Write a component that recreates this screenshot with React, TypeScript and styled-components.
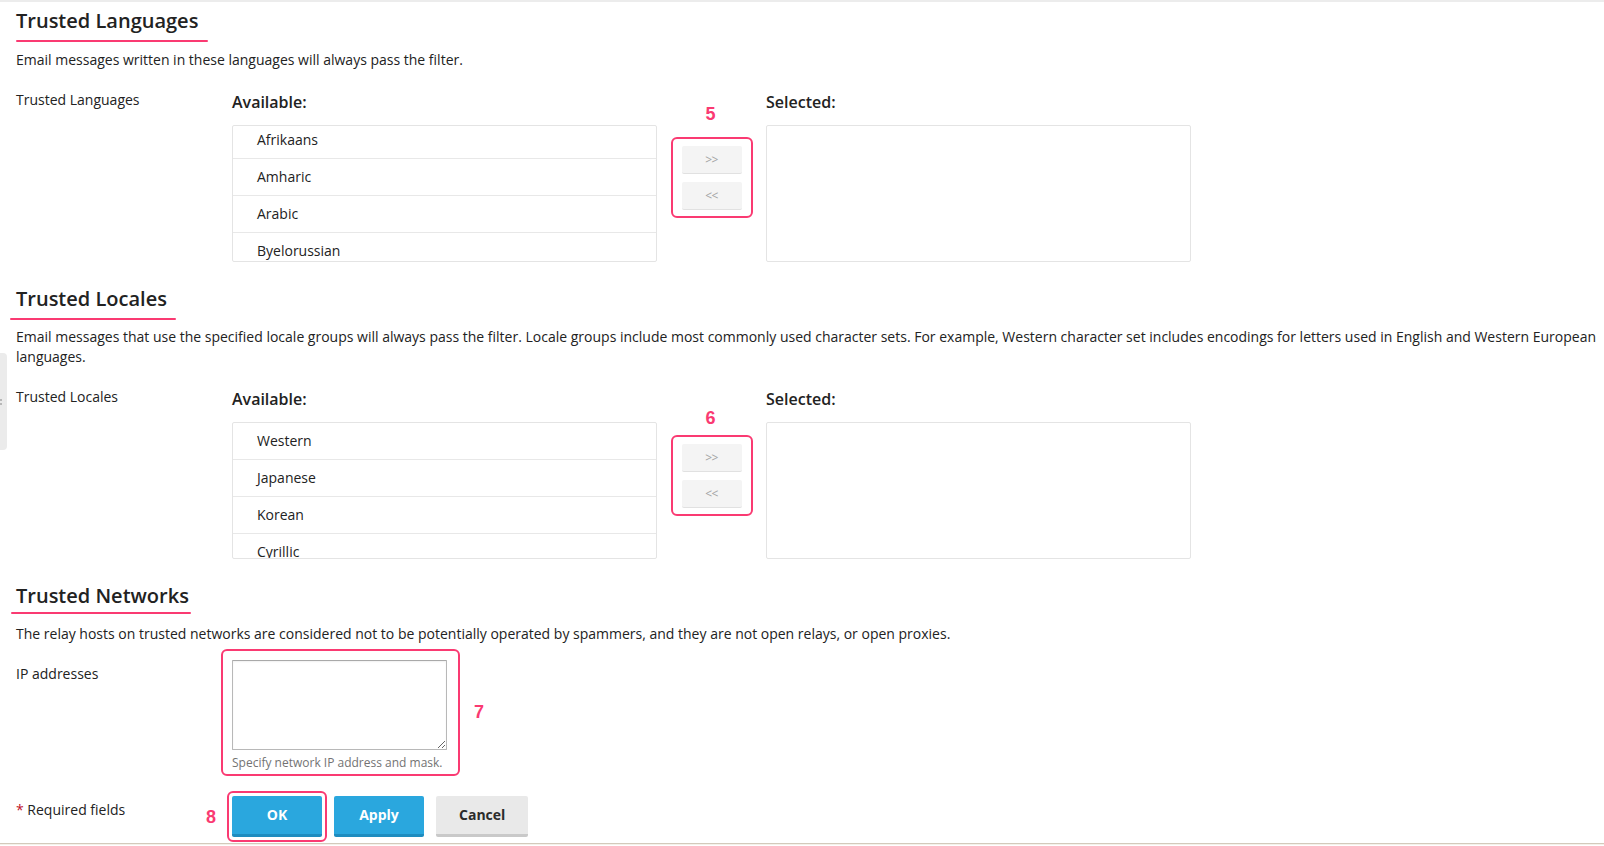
import React from "react";
import styled, { createGlobalStyle } from "styled-components";

const ACCENT = "#fa3a72";

const GlobalStyle = createGlobalStyle`
  html, body {
    margin: 0;
    padding: 0;
    overflow: hidden;
    background: #ffffff;
  }
  body {
    font-family: "Open Sans", "Noto Sans", Arial, sans-serif;
    color: #222222;
    font-size: 14px;
  }
  * { box-sizing: border-box; }
`;

const Shell = styled.div`
  position: relative;
  border-top: 2px solid #ececec;
  min-height: 844px;
  display: flex;
  flex-direction: column;
`;

const Content = styled.main`
  padding: 5px 4px 0 16px;
`;

const SideHandle = styled.div`
  position: absolute;
  left: 0;
  top: 351px;
  width: 7px;
  height: 97px;
  background: #ebebeb;
  border-radius: 0 4px 4px 0;
  display: flex;
  align-items: center;
  overflow: hidden;
`;

const Section = styled.section`
  & + & {
    margin-top: 23px;
  }
`;

const Heading = styled.h2<{ $ulLeft: number; $ulTop: number; $ulWidth: number }>`
  position: relative;
  margin: 0;
  font-size: 20px;
  line-height: 28px;
  font-weight: 600;
  color: #222222;

  &::after {
    content: "";
    position: absolute;
    left: ${(p) => p.$ulLeft}px;
    top: ${(p) => p.$ulTop}px;
    width: ${(p) => p.$ulWidth}px;
    height: 2px;
    border-radius: 1px;
    background: ${ACCENT};
  }
`;

const Description = styled.p<{ $gap?: number }>`
  margin: ${(p) => p.$gap ?? 14.5}px 0 0;
  font-size: 14px;
  line-height: 20px;
  color: #222222;
`;

const FormRow = styled.div<{ $gap?: number }>`
  display: grid;
  grid-template-columns: 216px 1fr;
  margin-top: ${(p) => p.$gap ?? 16}px;
`;

const FieldLabel = styled.div`
  padding-top: 4px;
  font-size: 14px;
  line-height: 20px;
  color: #222222;
`;

const Star = styled.span`
  color: #c0102a;
`;

const DualList = styled.div`
  display: flex;
  align-items: flex-start;
`;

const ListColumn = styled.div`
  width: 425px;
`;

const ListTitle = styled.div`
  margin: 4px 0 11px;
  font-size: 16px;
  line-height: 24px;
  font-weight: 600;
  color: #222222;
`;

const ListBox = styled.div`
  height: 137px;
  border: 1px solid #e4e4e4;
  border-radius: 2px;
  overflow: hidden;
  background: #ffffff;
`;

const ListTrack = styled.ul<{ $shift: number }>`
  list-style: none;
  margin: ${(p) => -p.$shift}px 0 0;
  padding: 0;
`;

const ListItem = styled.li`
  height: 37px;
  line-height: 36px;
  padding-left: 24px;
  border-bottom: 1px solid #e8e8e8;
  font-size: 14px;
  color: #222222;
`;

const MoverColumn = styled.div<{ $drop: number }>`
  width: 109px;
  display: flex;
  justify-content: center;
  padding-top: ${(p) => 39 + p.$drop}px;
`;

const MoverGroup = styled.div`
  position: relative;
  display: flex;
  flex-direction: column;
  gap: 8px;
  padding: 7px 9px 6px;
  border: 2px solid ${ACCENT};
  border-radius: 6px;
`;

const MoveButton = styled.button`
  width: 60px;
  height: 28px;
  padding: 0;
  border: none;
  border-bottom: 1px solid #e1e1e1;
  border-radius: 2px;
  background: #f4f4f4;
  color: #a3a3a3;
  font-family: "Open Sans", Arial, sans-serif;
  font-size: 12px;
  line-height: 27px;
  letter-spacing: -0.5px;
`;

const StepBadge = styled.span<{ $top: number; $left: number }>`
  position: absolute;
  top: ${(p) => p.$top}px;
  left: ${(p) => p.$left}px;
  font-family: "Liberation Sans", Arial, sans-serif;
  font-weight: 700;
  font-size: 18px;
  line-height: 18px;
  color: ${ACCENT};
  pointer-events: none;
`;

const TextStack = styled.div`
  position: relative;
  width: 215px;
`;

const TextArea = styled.textarea`
  display: block;
  width: 215px;
  height: 90px;
  margin: 0;
  border: 1px solid #b8b8b8;
  border-top-color: #a9a9a9;
  border-radius: 1px;
  box-shadow: inset 0 1px 2px rgba(0, 0, 0, 0.06);
  resize: both;
  font-family: "Open Sans", Arial, sans-serif;
  font-size: 14px;
`;

const Hint = styled.div`
  margin-top: 5px;
  font-size: 12px;
  line-height: 16px;
  color: #737373;
  white-space: nowrap;
`;

const CalloutFrame = styled.span<{ $inset: string }>`
  position: absolute;
  inset: ${(p) => p.$inset};
  border: 2px solid ${ACCENT};
  border-radius: 6px;
  pointer-events: none;
`;

const ButtonBar = styled.div`
  display: flex;
  align-items: flex-start;
  gap: 12px;
`;

const ButtonSlot = styled.div`
  position: relative;
  display: flex;
`;

const ActionButton = styled.button<{ $variant: "primary" | "secondary" }>`
  min-width: 90px;
  height: 41px;
  padding: 0 23px;
  border: none;
  border-radius: 2px;
  border-bottom: 3px solid
    ${(p) => (p.$variant === "primary" ? "#1e8cbf" : "#c9c9c9")};
  background: ${(p) => (p.$variant === "primary" ? "#2aa7de" : "#e9e9e9")};
  color: ${(p) => (p.$variant === "primary" ? "#ffffff" : "#2b2b2b")};
  font-family: "Open Sans", Arial, sans-serif;
  font-size: 14px;
  font-weight: 700;
  line-height: 38px;
`;

const FooterRule = styled.footer`
  margin-top: 6px;
  height: 2px;
  border-top: 1px solid #d3cabb;
  background: #f5f1eb;
`;

type Mover = {
  title: string;
  items: string[];
  shift: number;
  drop: number;
  step: string;
  stepTop: number;
};

function ListSelector({ title, items, shift, drop, step, stepTop }: Mover) {
  return (
    <DualList>
      <ListColumn>
        <ListTitle>Available:</ListTitle>
        <ListBox aria-label={title}>
          <ListTrack $shift={shift}>
            {items.map((item) => (
              <ListItem key={item}>{item}</ListItem>
            ))}
          </ListTrack>
        </ListBox>
      </ListColumn>
      <MoverColumn $drop={drop}>
        <MoverGroup>
          <StepBadge $top={stepTop} $left={33}>
            {step}
          </StepBadge>
          <MoveButton type="button">&gt;&gt;</MoveButton>
          <MoveButton type="button">&lt;&lt;</MoveButton>
        </MoverGroup>
      </MoverColumn>
      <ListColumn>
        <ListTitle>Selected:</ListTitle>
        <ListBox />
      </ListColumn>
    </DualList>
  );
}

export default function App() {
  return (
    <>
      <GlobalStyle />
      <Shell>
        <SideHandle>
          <svg width="3" height="8" viewBox="0 0 3 8" aria-hidden="true">
            <circle cx="1" cy="2" r="0.8" fill="#777" />
            <circle cx="1" cy="6" r="0.8" fill="#777" />
          </svg>
        </SideHandle>
        <Content>
          <Section>
            <Heading $ulLeft={0} $ulTop={33} $ulWidth={192}>
              Trusted Languages
            </Heading>
            <Description>
              Email messages written in these languages will always pass the filter.
            </Description>
            <FormRow>
              <FieldLabel>Trusted Languages</FieldLabel>
              <ListSelector
                title="Trusted Languages"
                items={["Afrikaans", "Amharic", "Arabic", "Byelorussian", "Bengali"]}
                shift={4}
                drop={12}
                step="5"
                stepTop={-34}
              />
            </FormRow>
          </Section>

          <Section>
            <Heading $ulLeft={-6} $ulTop={33} $ulWidth={166}>
              Trusted Locales
            </Heading>
            <Description>
              Email messages that use the specified locale groups will always pass the
              filter. Locale groups include most commonly used character sets. For
              example, Western character set includes encodings for letters used in
              English and Western European languages.
            </Description>
            <FormRow>
              <FieldLabel>Trusted Locales</FieldLabel>
              <ListSelector
                title="Trusted Locales"
                items={["Western", "Japanese", "Korean", "Cyrillic", "Chinese"]}
                shift={0}
                drop={13}
                step="6"
                stepTop={-28}
              />
            </FormRow>
          </Section>

          <Section>
            <Heading $ulLeft={-5} $ulTop={30} $ulWidth={180}>
              Trusted Networks
            </Heading>
            <Description $gap={13.5}>
              The relay hosts on trusted networks are considered not to be potentially
              operated by spammers, and they are not open relays, or open proxies.
            </Description>
            <FormRow>
              <FieldLabel>IP addresses</FieldLabel>
              <div>
                <TextStack>
                  <TextArea aria-label="IP addresses" />
                  <Hint>Specify network IP address and mask.</Hint>
                  <CalloutFrame $inset="-11px -13px -5px -11px" />
                  <StepBadge $top={43} $left={242}>
                    7
                  </StepBadge>
                </TextStack>
              </div>
            </FormRow>
          </Section>

          <FormRow $gap={25}>
            <FieldLabel>
              <Star>*</Star> Required fields
            </FieldLabel>
            <ButtonBar>
              <ButtonSlot>
                <ActionButton type="button" $variant="primary">
                  OK
                </ActionButton>
                <CalloutFrame $inset="-5px" />
                <StepBadge $top={12} $left={-26}>
                  8
                </StepBadge>
              </ButtonSlot>
              <ActionButton type="button" $variant="primary">
                Apply
              </ActionButton>
              <ActionButton type="button" $variant="secondary">
                Cancel
              </ActionButton>
            </ButtonBar>
          </FormRow>
        </Content>
        <FooterRule />
      </Shell>
    </>
  );
}
